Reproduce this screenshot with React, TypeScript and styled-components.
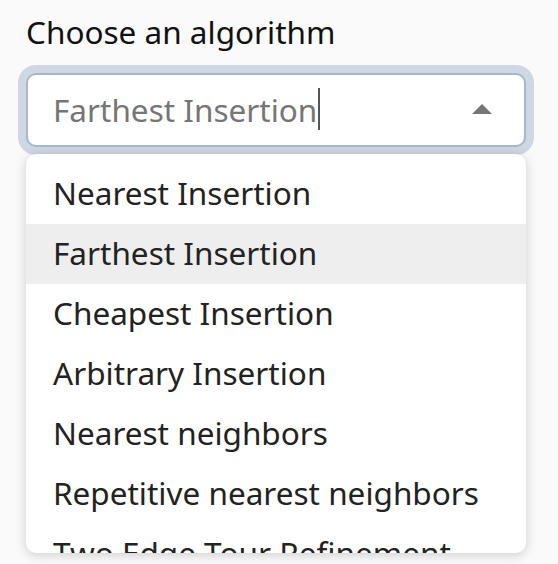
import styled, { createGlobalStyle } from "styled-components"

const options = [
    "Nearest Insertion",
    "Farthest Insertion",
    "Cheapest Insertion",
    "Arbitrary Insertion",
    "Nearest neighbors",
    "Repetitive nearest neighbors",
    "Two Edge Tour Refinement",
]

const selected = "Farthest Insertion"

export default function App(){
    return(
        <>
            <GlobalStyle/>
            <Page>
                <Label>Choose an algorithm</Label>
                <Field role="combobox" aria-expanded="true">
                    <Value>{selected}</Value>
                    <Caret width="20" height="10" viewBox="0 0 20 10"><path d="M0 10 10 0 20 10z" fill="#777"/></Caret>
                </Field>
                <Menu role="listbox">
                    {options.map(o => (
                        <Option key={o} $active={o === selected}>{o}</Option>
                    ))}
                </Menu>
            </Page>
        </>
    )
}

const GlobalStyle = createGlobalStyle`
    html, body{
        margin: 0;
        background: #fafafa;
        font-family: "Noto Sans", "Open Sans", sans-serif;
    }
`

const Page = styled.div`
    width: 558px;
    height: 564px;
    overflow: hidden;
    padding: 12px 0 0 26px;
    box-sizing: border-box;
`

const Label = styled.div`
    font-size: 31.5px;
    line-height: 40px;
    color: #111;
    margin-bottom: 21px;
`

const Field = styled.div`
    width: 500px;
    height: 74px;
    box-sizing: border-box;
    border: 2px solid #a6b8cd;
    border-radius: 10px;
    background: #fff;
    box-shadow: 0 0 0 8px #cfd7e2;
    display: flex;
    align-items: center;
    padding: 0 0 2px 25px;
`

const Value = styled.span`
    flex: 1;
    display: flex;
    align-items: center;
    font-size: 31.5px;
    color: #757575;
    &::after{
        content: "";
        width: 2px;
        height: 42px;
        margin-left: 1px;
        background: #555;
    }
`

const Caret = styled.svg`
    flex: none;
    margin-right: 32px;
`

const Menu = styled.ul`
    list-style: none;
    margin: 7px 0 0;
    padding: 10px 0 0;
    width: 500px;
    height: 399px;
    box-sizing: border-box;
    overflow: hidden;
    background: #fff;
    border-radius: 10px;
    box-shadow: 0 2px 12px rgba(0,0,0,0.18);
`

const Option = styled.li<{ $active?: boolean }>`
    height: 60px;
    box-sizing: border-box;
    display: flex;
    align-items: center;
    padding: 0 0 3px 27px;
    font-size: 31.5px;
    white-space: nowrap;
    color: #222;
    background: ${p => p.$active ? "#eeeeee" : "transparent"};
`
